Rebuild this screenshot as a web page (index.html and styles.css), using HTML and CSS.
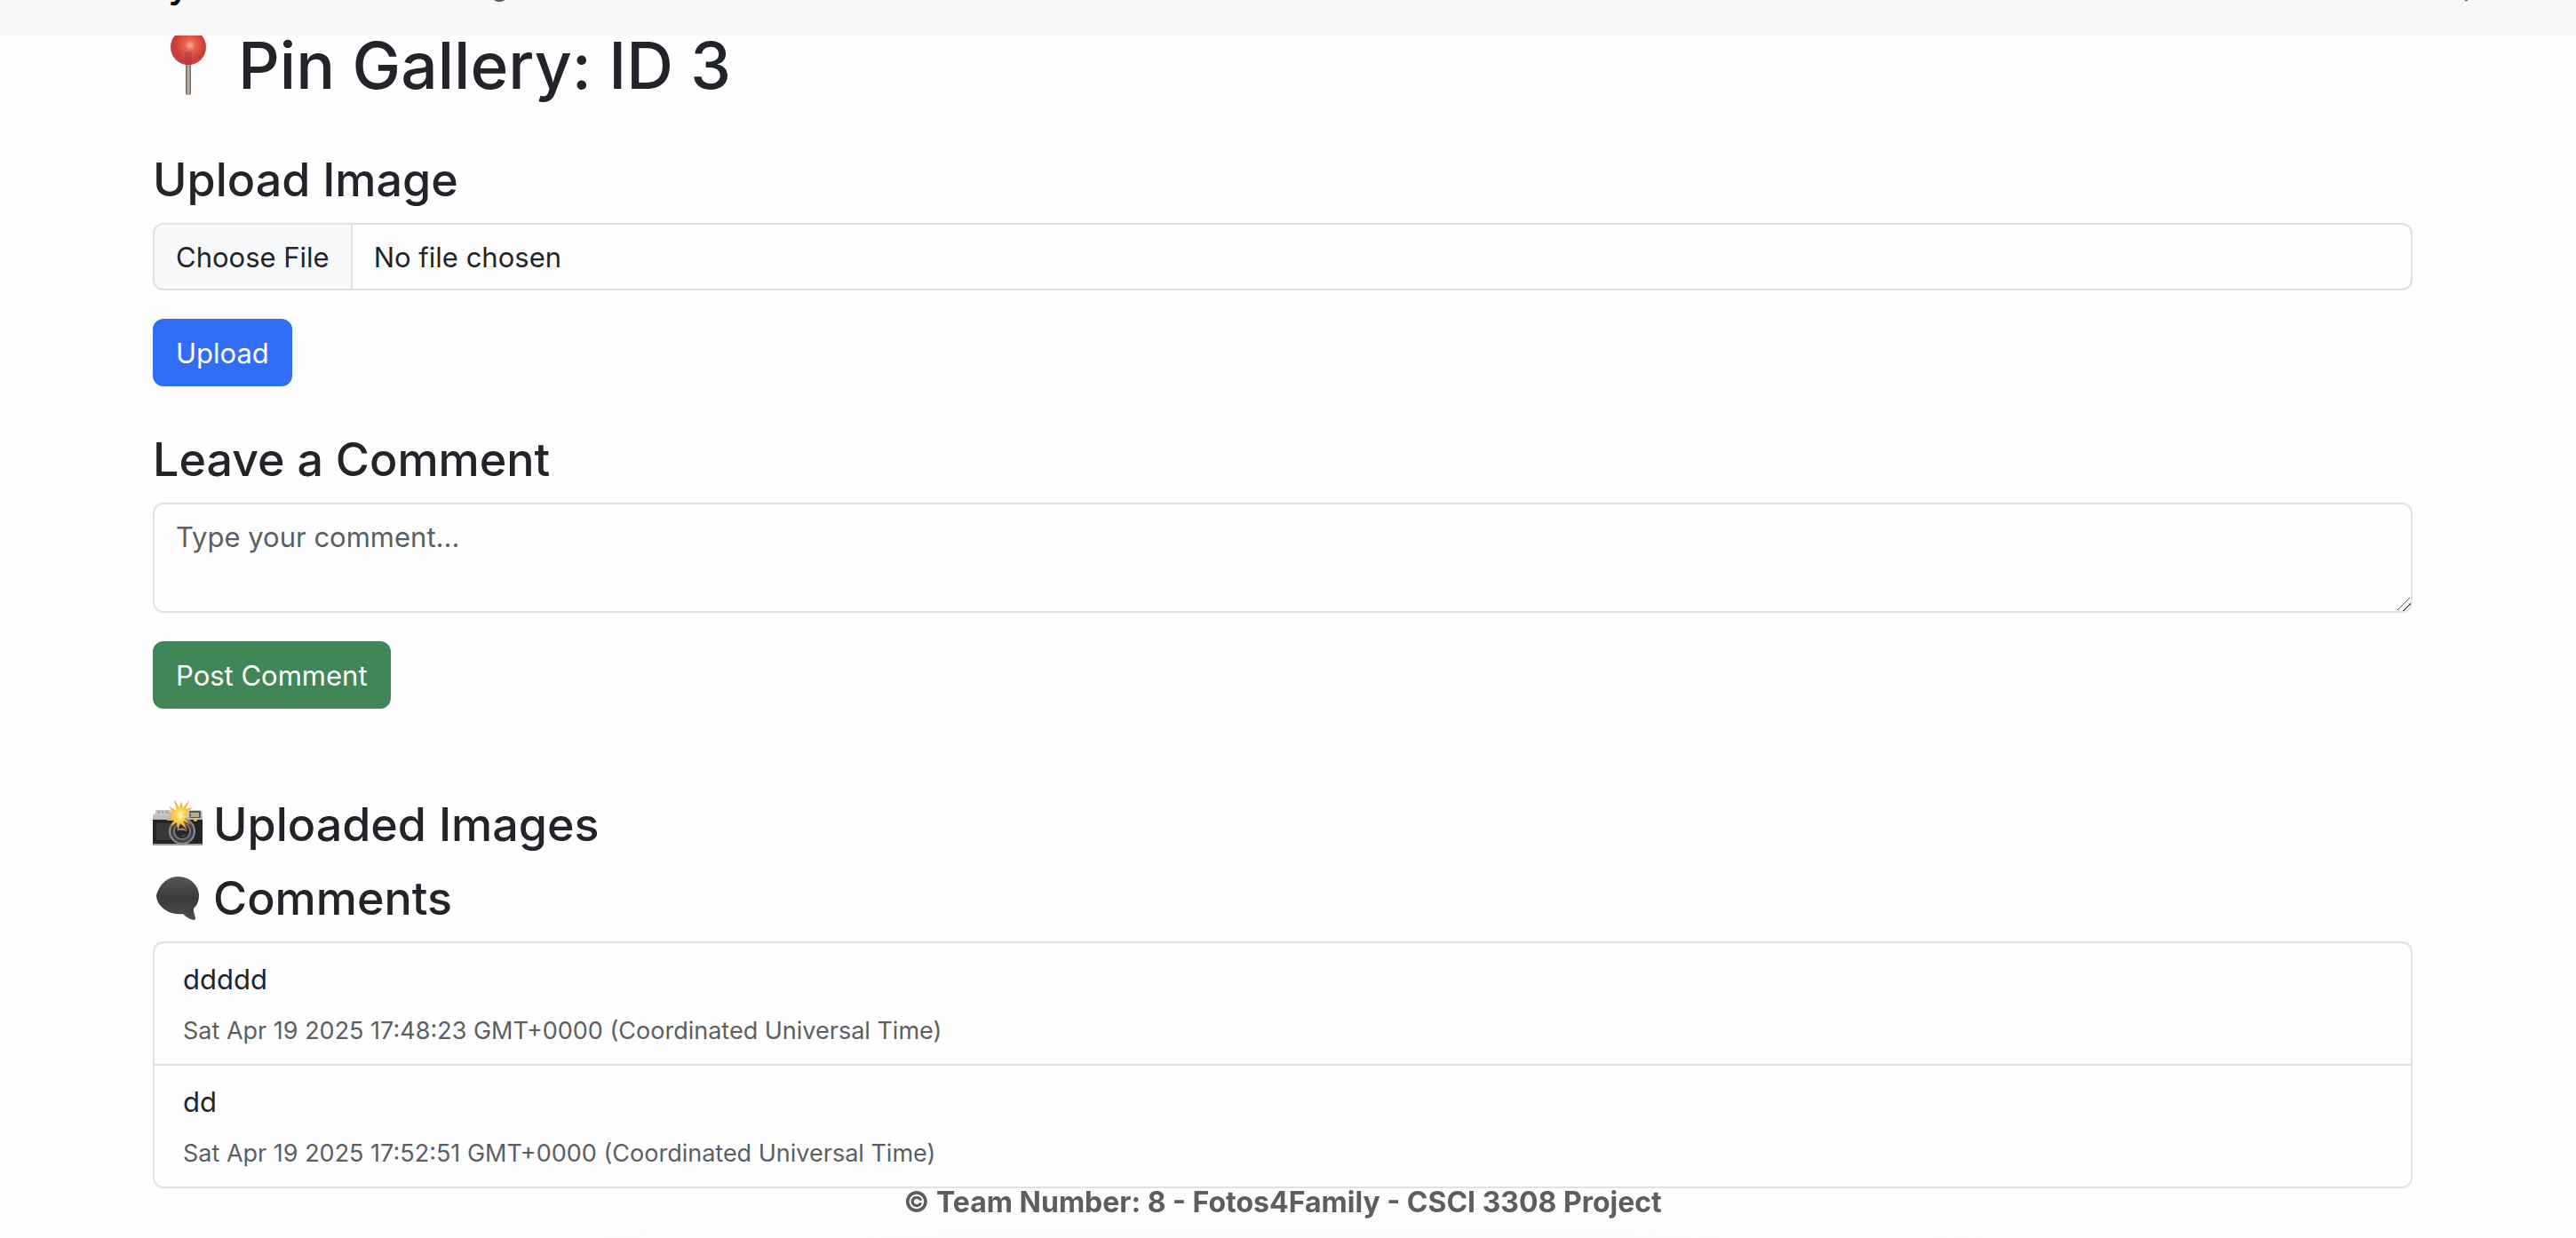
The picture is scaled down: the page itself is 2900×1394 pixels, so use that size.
FILE: index.html
```html
<!DOCTYPE html>
<html lang="en">
<head>
<meta charset="utf-8">
<meta name="viewport" content="width=device-width, initial-scale=1">
<title>Pin Gallery</title>
<link rel="stylesheet" href="styles.css">
</head>
<body>
<header class="navbar">
  <nav class="navbar-inner">
    <a class="brand" href="#">My</a>
    <a class="nav-link nav-page" href="#">g</a>
    <a class="nav-link nav-account" href="#">p</a>
  </nav>
</header>
<main class="container">
  <h1 class="title">
    <svg class="pin-icon" viewBox="0 2 80 80" aria-hidden="true">
      <defs>
        <radialGradient id="ball" cx="55%" cy="45%" r="60%">
          <stop offset="0" stop-color="#f6b09a"/><stop offset=".25" stop-color="#e8644e"/>
          <stop offset=".7" stop-color="#cf3d36"/><stop offset="1" stop-color="#b24456"/>
        </radialGradient>
        <linearGradient id="stem">
          <stop offset="0" stop-color="#5c5650"/><stop offset=".5" stop-color="#c9bdb0"/><stop offset="1" stop-color="#6b625c"/>
        </linearGradient>
      </defs>
      <rect x="37" y="38" width="6" height="37" rx="2" fill="url(#stem)"/>
      <circle cx="40" cy="21" r="20" fill="url(#ball)"/>
      <path d="M36 41V27q4-3 8 0v14z" fill="#a83a48" opacity=".5"/>
    </svg>
    <span>Pin Gallery: ID 3</span>
  </h1>

  <form class="form">
    <h3 class="heading"><label for="image">Upload Image</label></h3>
    <input class="control file" type="file" id="image">
    <button class="btn btn-primary" type="button">Upload</button>
  </form>

  <form class="form">
    <h3 class="heading"><label for="comment">Leave a Comment</label></h3>
    <textarea class="control" id="comment" rows="2" placeholder="Type your comment..."></textarea>
    <button class="btn btn-success" type="button">Post Comment</button>
  </form>

  <section class="gallery">
    <h3 class="heading">
      <svg class="emoji" viewBox="0 0 56 56" aria-hidden="true">
        <defs>
          <linearGradient id="silver" x2="0" y2="1"><stop offset="0" stop-color="#d8d8d8"/><stop offset="1" stop-color="#b5b5b5"/></linearGradient>
          <radialGradient id="flash"><stop offset="0" stop-color="#fffbe0"/><stop offset=".3" stop-color="#ffdc4a"/><stop offset="1" stop-color="#f18a1c"/></radialGradient>
        </defs>
        <rect x="3" y="11" width="17" height="7" rx="1" fill="#c4c7c9"/>
        <path d="M7 12v5M11 12v5M16 12v5" stroke="#83878a"/>
        <path d="M0 18q0-3 3-3h13l5-4h32q3 0 3 3v8H0z" fill="url(#silver)"/>
        <rect y="22" width="56" height="28" fill="#252525"/>
        <path d="M4 26h16v19H4z" fill="#383838"/>
        <path d="M0 49h56v2H0z" fill="#a0a0a0"/>
        <rect x="41" y="12" width="13" height="8" rx="1" fill="#555"/><rect x="43" y="14" width="9" height="5" fill="#b9a98c"/>
        <circle cx="33" cy="35" r="15" fill="#8c8e90"/><circle cx="33" cy="35" r="13" fill="#444648"/>
        <circle cx="33" cy="35" r="10" fill="#77797c"/><circle cx="33" cy="35" r="8" fill="#26282b"/>
        <path d="M27 34q6-6 12 1-7-2-12-1zM28 39q5 3 10-1-3 5-10 1z" fill="#85898e"/>
        <circle cx="48" cy="22" r="2" fill="#ffc928"/>
        <path d="M31 16 44 19 35 20 43 28 34 23 39 34 31 26 28 35 27 25 20 30 24 23 15 23 23 19 14 13 24 15 18 7 27 12 24 -1 30 9 32 1 34 9 41 0 37 10 45 8 38 14 48 15z" fill="url(#flash)"/>
      </svg>
      <span>Uploaded Images</span>
    </h3>
  </section>

  <section>
    <h3 class="heading">
      <svg class="emoji" viewBox="0 0 56 56" aria-hidden="true">
        <defs><linearGradient id="bubble" x2="0" y2="1"><stop offset="0" stop-color="#575757"/><stop offset=".5" stop-color="#3a3a3a"/><stop offset="1" stop-color="#4d4d4d"/></linearGradient></defs>
        <path d="M28 3C43 3 52 14 52 24 52 32 49 36 46 39 45 44 50 50 47 52 43 52 38 49 34 45 16 47 4 35 4 24 7 12 17 3 28 3z" fill="url(#bubble)"/>
      </svg>
      <span>Comments</span>
    </h3>
    <ul class="comments">
      <li class="comment">
        <p class="comment-text">ddddd</p>
        <small class="comment-time">Sat Apr 19 2025 17:48:23 GMT+0000 (Coordinated Universal Time)</small>
      </li>
      <li class="comment">
        <p class="comment-text">dd</p>
        <small class="comment-time">Sat Apr 19 2025 17:52:51 GMT+0000 (Coordinated Universal Time)</small>
      </li>
    </ul>
  </section>
</main>
<footer class="footer">© Team Number: 8 - Fotos4Family - CSCI 3308 Project</footer>
</body>
</html>
```
FILE: styles.css
```css
* { box-sizing: border-box; }

body {
  margin: 0;
  padding-right: 12px;
  background: #fefefe;
  color: #212529;
  font-family: Inter, "Liberation Sans", sans-serif;
  font-size: 31px;
  line-height: 48px;
}

h1, h3, p, ul { margin: 0; padding: 0; }

/* Navigation bar, pinned to the top of the window */
.navbar {
  position: fixed;
  inset: 0 0 auto;
  z-index: 2;
  height: 40px;
  overflow: hidden;
  background: #f8f9fb;
}

.navbar-inner {
  display: flex;
  margin-top: -40px;
  padding: 0 108px 0 152px;
}

.brand, .nav-link { color: #5c5f62; font-size: 32px; text-decoration: none; }
.brand { color: #000; font-size: 40px; font-weight: 600; }
.nav-page { margin-left: 340px; }
.nav-account { margin-left: auto; }

.container {
  max-width: 2544px;
  margin: 0 auto;
  padding-top: 26px;
}

.title {
  display: flex;
  align-items: center;
  gap: 16px;
  margin-bottom: 46px;
  font-size: 73px;
  font-weight: 500;
  line-height: 96px;
}

.pin-icon { flex: none; width: 80px; height: 80px; }

.heading {
  display: flex;
  align-items: center;
  gap: 12px;
  margin-bottom: 16px;
  padding-top: 2px;
  font-size: 52px;
  font-weight: 500;
  line-height: 65px;
}

.emoji { flex: none; width: 56px; height: 56px; }

.form { margin-bottom: 48px; }

.control {
  display: block;
  width: 100%;
  margin: 0 0 32px;
  padding: 13px 24px 11px;
  border: 2px solid #dee2e6;
  border-radius: 12px;
  background: #fefefe;
  color: #212529;
  font: inherit;
}

.control::placeholder { color: #5c5f62; opacity: 1; }

.control::-webkit-resizer {
  background: linear-gradient(135deg, transparent 44%, #5c5f62 44%, #5c5f62 50%, transparent 50%, transparent 70%, #5c5f62 70%, #5c5f62 76%, transparent 76%);
}

.file { height: 76px; overflow: hidden; }

.file::file-selector-button {
  margin: -13px 24px -11px -24px;
  padding: 13px 24px 11px;
  border: 0 solid #dee2e6;
  border-right-width: 2px;
  background: #f8f9fb;
  color: #212529;
  font: inherit;
}

.btn {
  display: block;
  padding: 13px 24px 11px;
  border: 2px solid;
  border-radius: 12px;
  color: #fff;
  font: inherit;
}

.btn-primary { border-color: #316df6; background: #316df6; }
.btn-success { border-color: #418658; background: #418658; }

.gallery { margin-top: 96px; }

.comments {
  overflow: hidden;
  border: 2px solid #dee2e6;
  border-radius: 12px;
  list-style: none;
}

.comment { padding: 17px 32px 13px; }
.comment + .comment { border-top: 2px solid #dee2e6; }
.comment-text { margin-bottom: 8px; }
.comment-time { color: #5c5f62; font-size: 27px; }

/* Footer stays at the bottom of the window, over the page */
.footer {
  position: fixed;
  inset: auto 0 0;
  padding: 0 12px 16px 0;
  background: radial-gradient(ellipse 50% 36px at 50% 100%, #fafafa, #fafafa00);
  color: #5c5f62;
  font-size: 32px;
  font-weight: 700;
  text-align: center;
}
```
